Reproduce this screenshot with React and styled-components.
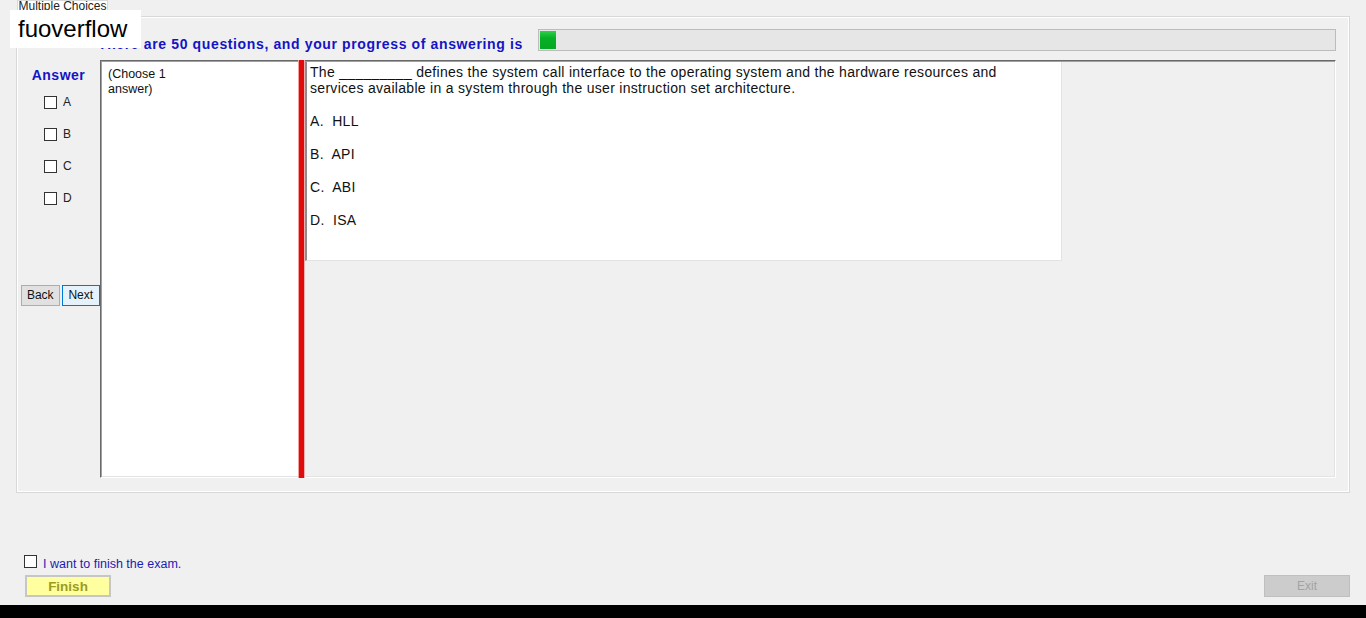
import React from 'react';
import styled, { createGlobalStyle } from 'styled-components';

const GlobalStyle = createGlobalStyle`
    html, body {
        margin: 0;
        padding: 0;
        background: #f0f0f0;
        font-family: "Liberation Sans", Arial, sans-serif;
        overflow: hidden;
    }
`

const Page = styled.div`
    position: relative;
    width: 1366px;
    height: 618px;
    display: flex;
    flex-direction: column;
    background: #f0f0f0;
`

const Watermark = styled.div`
    position: absolute;
    top: 10px;
    left: 10px;
    width: 131px;
    height: 38px;
    box-sizing: border-box;
    padding-left: 8px;
    background: #fff;
    color: #000;
    font-size: 24px;
    line-height: 38px;
    z-index: 5;
`

const TabStrip = styled.div`
    display: flex;
    height: 16px;
    padding-left: 17px;
`

const Tab = styled.div`
    width: 91px;
    height: 16px;
    box-sizing: border-box;
    border: 1px solid #d9d9d9;
    border-bottom: 0;
    background: #fff;
    color: #222;
    font-size: 12px;
    line-height: 11px;
    text-align: center;
    white-space: nowrap;
    overflow: hidden;
`

const TabPage = styled.div`
    margin-left: 16px;
    width: 1334px;
    height: 477px;
    box-sizing: border-box;
    border: 1px solid #d8d8d8;
    box-shadow: inset 1px 1px 0 #fff, inset -1px -1px 0 #fff;
    background: #f0f0f0;
    padding: 12px 13px 14px 0;
    display: flex;
    flex-direction: column;
`

const HeaderRow = styled.div`
    display: flex;
    align-items: center;
    height: 22px;
    gap: 15px;
`

const Headline = styled.div`
    padding-left: 81px;
    color: #1414c4;
    font-weight: bold;
    font-size: 14px;
    letter-spacing: 0.63px;
    white-space: nowrap;
    padding-top: 7px;
`

const Progress = styled.div`
    flex: 1;
    height: 22px;
    box-sizing: border-box;
    border: 1px solid #bcbcbc;
    background: #e6e6e6;
    padding: 1px;
`

const ProgressFill = styled.div`
    height: 100%;
    background: linear-gradient(#2ed04a, #06b025 40%, #06a824);
`

const MainRow = styled.div`
    display: flex;
    margin-top: 9px;
    height: 418px;
`

const AnswerColumn = styled.div`
    width: 83px;
    display: flex;
    flex-direction: column;
    padding-top: 7px;
`

const AnswerTitle = styled.div`
    color: #1414c4;
    font-weight: bold;
    font-size: 14px;
    letter-spacing: 0.5px;
    line-height: 16px;
    text-align: center;
`

const OptionList = styled.div`
    margin-top: 3px;
    display: flex;
    flex-direction: column;
`

const OptionRow = styled.label`
    display: flex;
    align-items: center;
    height: 32px;
    padding-left: 27px;
    gap: 6px;
    font-size: 12px;
    color: #222;
`

const CheckBox = styled.span`
    display: inline-block;
    flex-shrink: 0;
    width: 13px;
    height: 13px;
    box-sizing: border-box;
    border: 1px solid #333;
    background: #fff;
`

const NavRow = styled.div`
    display: flex;
    gap: 2px;
    margin-top: 71px;
    padding-left: 4px;
`

const NavButton = styled.div`
    width: 39px;
    height: 21px;
    box-sizing: border-box;
    border: 1px solid ${p => p.$active ? '#0078d7' : '#adadad'};
    background: ${p => p.$active ? '#e5f1fb' : '#e1e1e1'};
    font-size: 12px;
    line-height: 19px;
    text-align: center;
    color: #111;
`

const ContentPanel = styled.div`
    width: 1236px;
    box-sizing: border-box;
    display: flex;
    border-top: 1px solid #6a6a6a;
    border-left: 1px solid #6a6a6a;
    border-right: 1px solid #fff;
    border-bottom: 1px solid #fff;
    box-shadow: inset 1px 1px 0 #a0a0a0, inset -1px -1px 0 #e3e3e3;
    padding: 1px;
`

const ChoosePane = styled.div`
    width: 196px;
    background: #fff;
    padding: 5px 6px;
    box-sizing: border-box;
    font-size: 12.5px;
    line-height: 15px;
    color: #111;
`

const Splitter = styled.div`
    width: 7px;
    margin-top: -2px;
    margin-bottom: -2px;
    background: #e00a0a;
    box-shadow: inset 1px 0 0 #f2a0a0, inset -1px 0 0 #f0b0b0;
`

const QuestionArea = styled.div`
    flex: 1;
    background: #f0f0f0;
`

const QuestionBox = styled.div`
    width: 757px;
    height: 199px;
    box-sizing: border-box;
    background: #fff;
    border-left: 2px solid #8c8c8c;
    border-right: 1px solid #e3e3e3;
    border-bottom: 1px solid #e3e3e3;
    padding: 2px 3px;
    font-size: 14px;
    line-height: 16px;
    letter-spacing: 0.3px;
    color: #111;
`

const Stem = styled.div``

const Choice = styled.div`
    margin-top: 17px;
    white-space: pre;
`

const Footer = styled.div`
    flex: 1;
    display: flex;
    justify-content: space-between;
    align-items: flex-end;
    padding: 0 16px 8px 24px;
`

const FinishBlock = styled.div`
    display: flex;
    flex-direction: column;
`

const ConfirmRow = styled.label`
    display: flex;
    align-items: flex-start;
    gap: 6px;
    height: 14px;
    margin-bottom: 6px;
    color: #1c1cb0;
    font-size: 12.5px;
`

const ConfirmText = styled.span`
    line-height: 14px;
    margin-top: 2px;
`

const FinishButton = styled.div`
    margin-left: 1px;
    width: 86px;
    height: 22px;
    box-sizing: border-box;
    border: 2px solid #c6c6c6;
    background: #ffffa0;
    color: #9c9c1a;
    font-weight: bold;
    font-size: 13.5px;
    line-height: 19px;
    text-align: center;
`

const ExitButton = styled.div`
    width: 86px;
    height: 22px;
    box-sizing: border-box;
    border: 1px solid #bfbfbf;
    background: #cccccc;
    color: #a3a3a3;
    font-size: 12px;
    line-height: 20px;
    text-align: center;
`

const BlackBar = styled.div`
    height: 13px;
    background: #000;
`

const OPTIONS = ['A', 'B', 'C', 'D'];

const App = () => {
    const total = 50;
    const answered = 1;
    const pct = (answered / total) * 100;

    return (
        <Page>
            <GlobalStyle />
            <Watermark>fuoverflow</Watermark>
            <TabStrip>
                <Tab>Multiple Choices</Tab>
            </TabStrip>
            <TabPage>
                <HeaderRow>
                    <Headline>There are {total} questions, and your progress of answering is</Headline>
                    <Progress>
                        <ProgressFill style={{ width: `${pct}%` }} />
                    </Progress>
                </HeaderRow>
                <MainRow>
                    <AnswerColumn>
                        <AnswerTitle>Answer</AnswerTitle>
                        <OptionList>
                            {OPTIONS.map(opt => (
                                <OptionRow key={opt}>
                                    <CheckBox />
                                    {opt}
                                </OptionRow>
                            ))}
                        </OptionList>
                        <NavRow>
                            <NavButton>Back</NavButton>
                            <NavButton $active>Next</NavButton>
                        </NavRow>
                    </AnswerColumn>
                    <ContentPanel>
                        <ChoosePane>(Choose 1<br />answer)</ChoosePane>
                        <Splitter />
                        <QuestionArea>
                            <QuestionBox>
                                <Stem>
                                    The _________ defines the system call interface to the operating system and the hardware resources and<br />
                                    services available in a system through the user instruction set architecture.
                                </Stem>
                                <Choice>A.  HLL</Choice>
                                <Choice>B.  API</Choice>
                                <Choice>C.  ABI</Choice>
                                <Choice>D.  ISA</Choice>
                            </QuestionBox>
                        </QuestionArea>
                    </ContentPanel>
                </MainRow>
            </TabPage>
            <Footer>
                <FinishBlock>
                    <ConfirmRow>
                        <CheckBox />
                        <ConfirmText>I want to finish the exam.</ConfirmText>
                    </ConfirmRow>
                    <FinishButton>Finish</FinishButton>
                </FinishBlock>
                <ExitButton>Exit</ExitButton>
            </Footer>
            <BlackBar />
        </Page>
    )
}

export default App;
